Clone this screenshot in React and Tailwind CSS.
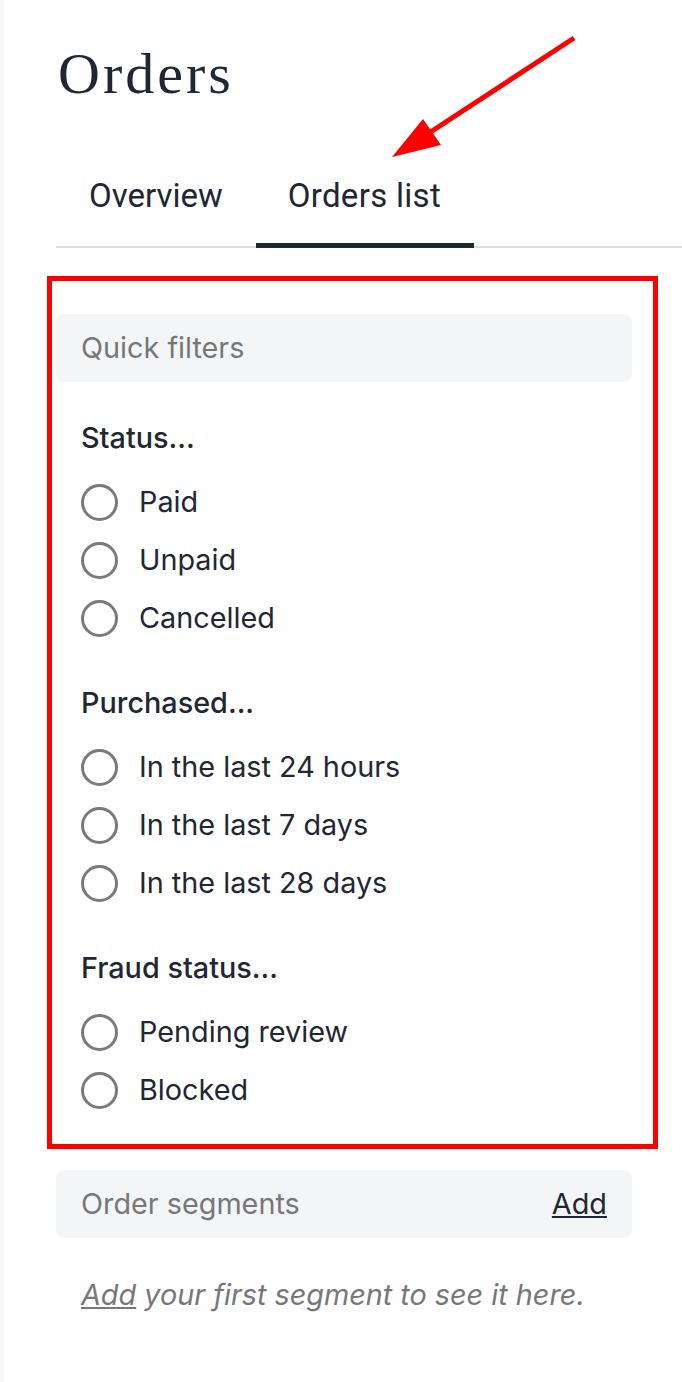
import React from 'react';

const filterGroups = [
    { title: 'Status...', options: ['Paid', 'Unpaid', 'Cancelled'] },
    { title: 'Purchased...', options: ['In the last 24 hours', 'In the last 7 days', 'In the last 28 days'] },
    { title: 'Fraud status...', options: ['Pending review', 'Blocked'] },
];

const Radio = ({ label }) => (
    <label className="flex items-center gap-[21px] h-[58px]">
        <span className="w-[37px] h-[37px] rounded-full border-[3px] border-[#7a7a7a] shrink-0"></span>
        <span className="text-[28.8px] leading-[36px] text-[#1f2733]">{label}</span>
    </label>
);

const App = () => {
    return (
        <div
            className="relative min-h-[1382px] bg-white border-l-[4px] border-[#f7f7f7] pl-[52px] pt-[42px]"
            style={{ fontFamily: 'Inter, "Noto Sans", sans-serif' }}
        >
            {/* стрелка-аннотация */}
            <svg className="absolute left-0 top-0 pointer-events-none" width="682" height="200">
                <line x1="570" y1="38" x2="425" y2="133" stroke="#ff0000" strokeWidth="5" />
                <polygon points="388,157 419,119 437,145" fill="#ff0000" />
            </svg>

            <h1
                className="text-[58px] leading-[64px] text-[#1f2733] tracking-[3px] ml-[2px]"
                style={{ fontFamily: '"Liberation Serif", serif' }}
            >
                Orders
            </h1>

            <div className="flex mt-[70px] border-b-[2px] border-[#dedede] mr-[-4px]">
                <button className="px-[33px] pb-[27px] text-[33px] leading-[40px] text-[#1f2733] border-b-[5px] border-transparent mb-[-2px]" style={{ fontFamily: 'Roboto, sans-serif' }}>
                    Overview
                </button>
                <button className="pl-[32px] pr-[33px] pb-[27px] text-[33px] leading-[40px] tracking-[0.3px] text-[#1f2733] border-b-[5px] border-[#1f2733] mb-[-2px]" style={{ fontFamily: 'Roboto, sans-serif' }}>
                    Orders list
                </button>
            </div>

            {/* Быстрые фильтры */}
            <div className="w-[611px] ml-[-9px] mt-[28px] border-[5px] border-[#ff0000] pl-[4px] pt-[33px] pb-[25px]">
                <div className="w-[576px] h-[68px] rounded-lg bg-[#f4f5f7] flex items-center px-[25px] text-[28.8px] text-[#777]">
                    Quick filters
                </div>
                <div className="pl-[25px]">
                    {filterGroups.map((group) => (
                        <div key={group.title} className="mt-[38px]">
                            <h3 className="text-[28.8px] leading-[36px] font-medium text-[#1f2733] mb-[17px]">{group.title}</h3>
                            {group.options.map((opt) => (
                                <Radio key={opt} label={opt} />
                            ))}
                        </div>
                    ))}
                </div>
            </div>

            <div className="w-[576px] h-[68px] mt-[21px] rounded-lg bg-[#f4f5f7] flex items-center justify-between px-[25px] text-[28.8px]">
                <span className="text-[#777]">Order segments</span>
                <a className="underline text-[#1f2733]">Add</a>
            </div>

            <p className="mt-[39px] pl-[25px] text-[28.8px] leading-[36px] italic text-[#777]">
                <a className="underline">Add</a> your first segment to see it here.
            </p>
        </div>
    );
};

export default App;
